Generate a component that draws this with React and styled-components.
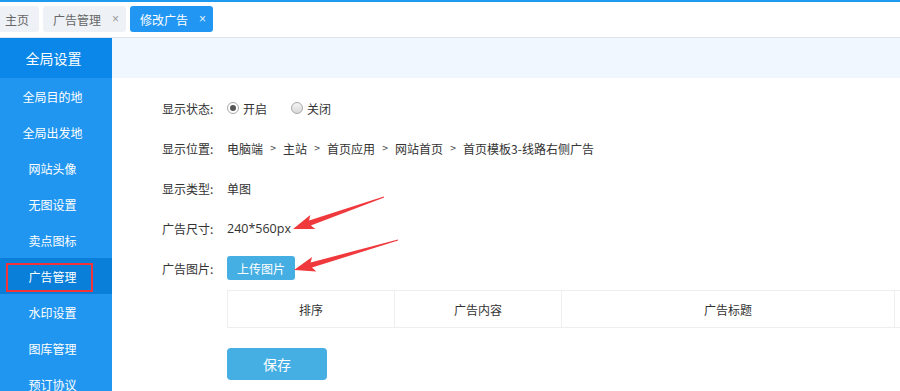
import React from "react";
import styled, { createGlobalStyle } from "styled-components";

const Global = createGlobalStyle`
  html, body { margin: 0; padding: 0; background: #fff; }
  body { font-family: "Noto Sans CJK SC", "Microsoft YaHei", sans-serif; font-size: 12px; color: #333; overflow: hidden; }
  * { box-sizing: border-box; }
`;

const Page = styled.div`
  position: relative;
  width: 900px;
  height: 391px;
  overflow: hidden;
  display: flex;
  flex-direction: column;
`;

const TopBar = styled.div`
  height: 38px;
  border-top: 2px solid #1e9bf0;
  border-bottom: 1px solid #dde6ef;
  display: flex;
  align-items: flex-start;
  padding-top: 4px;
  flex-shrink: 0;
`;

const Tabs = styled.div`
  display: flex;
  gap: 4px;
  margin-left: -5px;
`;

const Tab = styled.div`
  height: 26px;
  display: flex;
  align-items: center;
  gap: 11px;
  padding: 0 ${(p) => (p.$closable ? "7px" : "10px")} 0 10px;
  border-radius: 3px;
  background: ${(p) => (p.$active ? "#2196f3" : "#eef1f6")};
  color: ${(p) => (p.$active ? "#fff" : "#666")};
  font-size: 12px;
  white-space: nowrap;
`;

const Close = styled.span`
  display: inline-block;
  width: 7px;
  text-align: center;
  font-family: "Liberation Sans", sans-serif;
  font-size: 12px;
  color: ${(p) => (p.$active ? "#e3f1fd" : "#999")};
`;

const Main = styled.div`
  flex: 1;
  display: flex;
  min-height: 0;
`;

const Sidebar = styled.div`
  width: 112px;
  flex-shrink: 0;
  background: #2196f0;
  display: flex;
  flex-direction: column;
  overflow: hidden;
`;

const SideHead = styled.div`
  height: 40px;
  flex-shrink: 0;
  background: #0a87e8;
  color: #fff;
  font-size: 14px;
  display: flex;
  align-items: center;
  justify-content: center;
  padding-right: 5px;
`;

const SideItem = styled.div`
  position: relative;
  height: 36px;
  flex-shrink: 0;
  display: flex;
  align-items: center;
  justify-content: center;
  padding-right: 7px;
  color: #fff;
  font-size: 12px;
  background: ${(p) => (p.$active ? "#0a7fd9" : "transparent")};
`;

const Highlight = styled.span`
  position: absolute;
  left: 6px;
  top: 5px;
  width: 87px;
  height: 29px;
  border: 2px solid #f2333a;
`;

const Content = styled.div`
  flex: 1;
  display: flex;
  flex-direction: column;
  min-width: 0;
`;

const ContentHead = styled.div`
  height: 40px;
  flex-shrink: 0;
  background: #f0f7fe;
`;

const Form = styled.div`
  padding: 10px 0 0 50px;
  display: flex;
  flex-direction: column;
`;

const Row = styled.div`
  height: 40px;
  display: flex;
  align-items: center;
`;

const Label = styled.span`
  width: 65px;
  flex-shrink: 0;
  color: #333;
`;

const Value = styled.div`
  display: flex;
  align-items: center;
  color: #333;
  font-size: 12px;
  ${(p) => (p.$latin ? 'font-family: "Open Sans", "Noto Sans", sans-serif; font-size: 12.5px;' : "")}
`;

const RadioWrap = styled.label`
  display: flex;
  align-items: center;
  gap: 4px;
  margin-right: 24px;
`;

const RadioDot = styled.span`
  width: 12px;
  height: 12px;
  border-radius: 50%;
  border: 1px solid #a8a8a8;
  background: ${(p) => (p.$checked ? "#fff" : "linear-gradient(#f4f4f4, #d9d9d9)")};
  display: flex;
  align-items: center;
  justify-content: center;
  &::after {
    content: "";
    display: ${(p) => (p.$checked ? "block" : "none")};
    width: 6px;
    height: 6px;
    border-radius: 50%;
    background: #555;
  }
`;

const Crumb = styled.span``;

const Sep = styled.span`
  display: inline-block;
  width: 20px;
  text-align: center;
  font-family: "DejaVu Sans", sans-serif;
  font-size: 8px;
  color: #444;
`;

const SmallBtn = styled.button`
  height: 24px;
  padding: 0 10px;
  border: none;
  border-radius: 3px;
  background: #45aee3;
  color: #fff;
  font-family: inherit;
  font-size: 12px;
`;

const Table = styled.div`
  margin: 2px 0 0 65px;
  display: grid;
  grid-template-columns: 167px 167px 333px 100px;
  width: 800px;
  border-top: 1px solid #eee;
  border-bottom: 1px solid #eee;
  border-left: 1px solid #eee;
`;

const Th = styled.div`
  height: 36px;
  display: flex;
  align-items: center;
  justify-content: center;
  border-right: 1px solid #eee;
  color: #333;
`;

const SaveBtn = styled.button`
  margin: 20px 0 0 65px;
  width: 100px;
  height: 32px;
  border: none;
  border-radius: 4px;
  background: #45aee3;
  color: #fff;
  font-family: inherit;
  font-size: 14px;
`;

const Overlay = styled.svg`
  position: absolute;
  left: 0;
  top: 0;
  pointer-events: none;
`;

function arrowPoints(tip, tail, headLen = 18, headHalf = 7.5, shaftHalf = 2.6, tailHalf = 0.5) {
  const dx = tail[0] - tip[0];
  const dy = tail[1] - tip[1];
  const len = Math.hypot(dx, dy);
  const ux = dx / len, uy = dy / len;
  const nx = -uy, ny = ux;
  const bx = tip[0] + ux * headLen, by = tip[1] + uy * headLen;
  const wx = tip[0] + ux * (headLen + 3), wy = tip[1] + uy * (headLen + 3);
  const pts = [
    tip,
    [wx + nx * headHalf, wy + ny * headHalf],
    [bx + nx * shaftHalf, by + ny * shaftHalf],
    [tail[0] + nx * tailHalf, tail[1] + ny * tailHalf],
    [tail[0] - nx * tailHalf, tail[1] - ny * tailHalf],
    [bx - nx * shaftHalf, by - ny * shaftHalf],
    [wx - nx * headHalf, wy - ny * headHalf],
  ];
  return pts.map((p) => p.map((v) => v.toFixed(1)).join(",")).join(" ");
}

const sideItems = ["全局目的地", "全局出发地", "网站头像", "无图设置", "卖点图标", "广告管理", "水印设置", "图库管理", "预订协议"];
const crumbs = ["电脑端", "主站", "首页应用", "网站首页", "首页模板3-线路右侧广告"];

export default function App() {
  return (
    <Page>
      <Global />
      <TopBar>
        <Tabs>
          <Tab>主页</Tab>
          <Tab $closable>
            广告管理<Close>×</Close>
          </Tab>
          <Tab $closable $active>
            修改广告<Close $active>×</Close>
          </Tab>
        </Tabs>
      </TopBar>
      <Main>
        <Sidebar>
          <SideHead>全局设置</SideHead>
          {sideItems.map((t) => (
            <SideItem key={t} $active={t === "广告管理"}>
              {t}
              {t === "广告管理" && <Highlight />}
            </SideItem>
          ))}
        </Sidebar>
        <Content>
          <ContentHead />
          <Form>
            <Row>
              <Label>显示状态:</Label>
              <Value>
                <RadioWrap>
                  <RadioDot $checked />
                  开启
                </RadioWrap>
                <RadioWrap>
                  <RadioDot />
                  关闭
                </RadioWrap>
              </Value>
            </Row>
            <Row>
              <Label>显示位置:</Label>
              <Value>
                {crumbs.map((c, i) => (
                  <React.Fragment key={c}>
                    {i > 0 && <Sep>&gt;</Sep>}
                    <Crumb>{c}</Crumb>
                  </React.Fragment>
                ))}
              </Value>
            </Row>
            <Row>
              <Label>显示类型:</Label>
              <Value>单图</Value>
            </Row>
            <Row>
              <Label>广告尺寸:</Label>
              <Value $latin>240*560px</Value>
            </Row>
            <Row>
              <Label>广告图片:</Label>
              <SmallBtn>上传图片</SmallBtn>
            </Row>
            <Table>
              <Th>排序</Th>
              <Th>广告内容</Th>
              <Th>广告标题</Th>
              <Th />
            </Table>
            <SaveBtn>保存</SaveBtn>
          </Form>
        </Content>
      </Main>
      <Overlay width="900" height="391" viewBox="0 0 900 391">
        <polygon points={arrowPoints([293, 229], [384, 197])} fill="#f0393c" />
        <polygon points={arrowPoints([294, 270], [398, 240])} fill="#f0393c" />
      </Overlay>
    </Page>
  );
}
